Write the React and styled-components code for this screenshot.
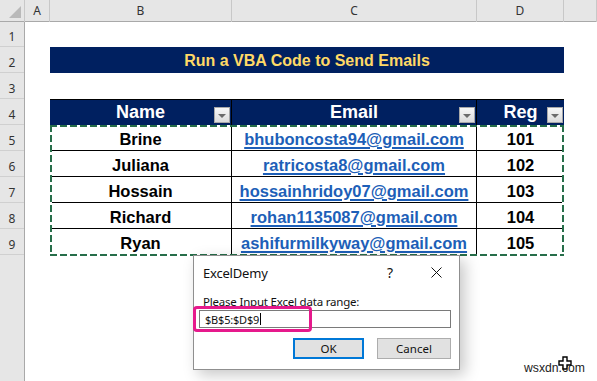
import React from 'react';
import styled, { createGlobalStyle } from 'styled-components';

const GlobalStyle = createGlobalStyle`
  * { box-sizing: border-box; }
  body {
    margin: 0;
    background: #fff;
    overflow: hidden;
    font-family: 'Liberation Sans', Arial, sans-serif;
  }
`;

const Window = styled.div`
  position: relative;
  width: 597px;
  height: 381px;
  overflow: hidden;
  background: #fff;
`;

/* ---------- column headers ---------- */

const ColBar = styled.div`
  display: grid;
  grid-template-columns: 25px 25px 182px 245px 87px 1fr;
  height: 22px;
  background: #e6e6e6;
  border-bottom: 1px solid #a9a9a9;
`;

const Corner = styled.div`
  display: flex;
  align-items: flex-end;
  justify-content: flex-end;
  padding: 0 3px 4px 0;
  border-right: 1px solid #c8c8c8;
`;

const CornerTriangle = styled.span`
  width: 0;
  height: 0;
  border-left: 12px solid transparent;
  border-bottom: 12px solid #b9b9b9;
`;

const ColHead = styled.div`
  font-family: 'Noto Sans', sans-serif;
  font-size: 12px;
  line-height: 22px;
  color: #333;
  text-align: center;
  border-right: 1px solid #c8c8c8;
`;

/* ---------- body ---------- */

const Main = styled.div`
  display: flex;
  height: 359px;
`;

const RowHeads = styled.div`
  display: flex;
  flex-direction: column;
  width: 25px;
  background: #e6e6e6;
  border-right: 1px solid #a9a9a9;
`;

const RowNum = styled.div`
  height: ${(p) => (p.$first ? 25 : 26)}px;
  flex-shrink: 0;
  padding-top: ${(p) => (p.$first ? 5 : 6)}px;
  font-family: 'Noto Sans', sans-serif;
  font-size: 12px;
  line-height: 20px;
  color: #333;
  text-align: center;
  border-bottom: 1px solid #d0d0d0;
`;

const RowFill = styled.div`
  flex: 1;
`;

const Canvas = styled.div`
  display: flex;
  flex-direction: column;
  padding-left: 25px;
`;

const EmptyRow = styled.div`
  height: ${(p) => p.$h || 26}px;
`;

const Title = styled.div`
  width: 514px;
  height: 26px;
  background: #002060;
  color: #ffd966;
  font-weight: bold;
  font-size: 16px;
  line-height: 27px;
  text-align: center;
`;

const Table = styled.div`
  width: 514px;
`;

const TableRow = styled.div`
  display: grid;
  grid-template-columns: 182px 245px 87px;
  height: 26px;
`;

const HeadCell = styled.div`
  position: relative;
  background: #002060;
  color: #fff;
  font-weight: bold;
  font-size: 18px;
  line-height: 25px;
  text-align: center;
  border-right: ${(p) => (p.$last ? 'none' : '1px solid #000')};
  border-top: 1px solid #000;
`;

const FilterBtn = styled.span`
  position: absolute;
  right: 1px;
  bottom: 2px;
  width: 16px;
  height: 16px;
  display: flex;
  align-items: center;
  justify-content: center;
  background: linear-gradient(#f7f7f7, #dcdcdc);
  border: 1px solid #a8a8a8;

  &::after {
    content: '';
    margin-top: 2px;
    border-left: 4px solid transparent;
    border-right: 4px solid transparent;
    border-top: 4px solid #6b6b6b;
  }
`;

const Body = styled.div`
  position: relative;

  &::after {
    content: '';
    position: absolute;
    inset: 0 0 -1px 0;
    pointer-events: none;
    background:
      repeating-linear-gradient(90deg, #276e4a 0 7px, #fff 7px 10px) top / 100% 2px no-repeat,
      repeating-linear-gradient(90deg, #276e4a 0 7px, #fff 7px 10px) bottom / 100% 2px no-repeat,
      repeating-linear-gradient(180deg, #276e4a 0 7px, #fff 7px 10px) left / 2px 100% no-repeat,
      repeating-linear-gradient(180deg, #276e4a 0 7px, #fff 7px 10px) right / 2px 100% no-repeat;
  }
`;

const DataCell = styled.div`
  padding-top: 3px;
  font-weight: bold;
  font-size: 16.5px;
  line-height: 22px;
  color: #000;
  text-align: center;
  white-space: nowrap;
  border-bottom: 1px solid #000;
  border-right: ${(p) => (p.$last ? 'none' : '1px solid #000')};
`;

const Email = styled.span`
  color: #1d5fb8;
  text-decoration: underline;
  text-decoration-thickness: 1.5px;
  text-underline-offset: 2px;
`;

/* ---------- dialog ---------- */

const Dialog = styled.div`
  position: absolute;
  left: 193px;
  top: 255px;
  width: 267px;
  height: 115px;
  background: #fff;
  border: 1px solid #8f8f8f;
  box-shadow: 5px 5px 14px rgba(0, 0, 0, 0.22);
  font-family: 'Noto Sans', sans-serif;
  font-size: 11.5px;
  color: #111;
`;

const TitleBar = styled.div`
  display: flex;
  align-items: center;
  height: 33px;
  padding-left: 9px;
`;

const DialogTitle = styled.span`
  flex: 1;
  font-size: 13px;
  letter-spacing: -0.2px;
`;

const TitleBtn = styled.span`
  width: 46px;
  height: 33px;
  display: flex;
  align-items: center;
  justify-content: center;
  font-size: 14px;
`;

const Prompt = styled.div`
  line-height: 15px;
  margin: 5px 0 0 9px;
  letter-spacing: -0.2px;
`;

const Input = styled.div`
  display: flex;
  align-items: center;
  margin: 1px 0 0 5px;
  width: 252px;
  height: 18px;
  border: 1px solid #7a7a7a;
  padding-left: 5px;
  font-size: 11px;
  letter-spacing: -0.2px;
`;

const Caret = styled.span`
  width: 1px;
  height: 12px;
  margin-left: 1px;
  background: #000;
`;

const Highlight = styled.span`
  position: absolute;
  left: -1px;
  top: 50px;
  width: 119px;
  height: 26px;
  border: 3px solid #e6198c;
  border-radius: 4px;
  pointer-events: none;
`;

const Buttons = styled.div`
  display: flex;
  justify-content: flex-end;
  gap: 13px;
  margin-top: 10px;
  padding-right: 8px;
`;

const Button = styled.div`
  width: ${(p) => p.$w}px;
  height: 21px;
  display: flex;
  align-items: center;
  justify-content: center;
  background: #e1e1e1;
  border: ${(p) => (p.$default ? '2px solid #0078d7' : '1px solid #adadad')};
`;

/* ---------- overlays ---------- */

const Watermark = styled.span`
  position: absolute;
  left: 524px;
  top: 361px;
  font-size: 12.2px;
  color: #222;
`;

const Cursor = styled.svg`
  position: absolute;
  left: 558px;
  top: 356px;
`;

const rows = [
  ['Brine', 'bhuboncosta94@gmail.com', '101'],
  ['Juliana', 'ratricosta8@gmail.com', '102'],
  ['Hossain', 'hossainhridoy07@gmail.com', '103'],
  ['Richard', 'rohan1135087@gmail.com', '104'],
  ['Ryan', 'ashifurmilkyway@gmail.com', '105'],
];

export default function App() {
  return (
    <Window>
      <GlobalStyle />
      <ColBar>
        <Corner>
          <CornerTriangle />
        </Corner>
        <ColHead>A</ColHead>
        <ColHead>B</ColHead>
        <ColHead>C</ColHead>
        <ColHead>D</ColHead>
        <ColHead />
      </ColBar>

      <Main>
        <RowHeads>
          {[1, 2, 3, 4, 5, 6, 7, 8, 9].map((n) => (
            <RowNum key={n} $first={n === 1}>
              {n}
            </RowNum>
          ))}
          <RowFill />
        </RowHeads>

        <Canvas>
          <EmptyRow $h={25} />
          <Title>Run a VBA Code to Send Emails</Title>
          <EmptyRow />
          <Table>
            <TableRow>
              <HeadCell>
                Name
                <FilterBtn />
              </HeadCell>
              <HeadCell>
                Email
                <FilterBtn />
              </HeadCell>
              <HeadCell $last>
                Reg
                <FilterBtn />
              </HeadCell>
            </TableRow>
            <Body>
              {rows.map(([name, email, reg]) => (
                <TableRow key={reg}>
                  <DataCell>{name}</DataCell>
                  <DataCell>
                    <Email>{email}</Email>
                  </DataCell>
                  <DataCell $last>{reg}</DataCell>
                </TableRow>
              ))}
            </Body>
          </Table>
        </Canvas>
      </Main>

      <Dialog>
        <TitleBar>
          <DialogTitle>ExcelDemy</DialogTitle>
          <TitleBtn>?</TitleBtn>
          <TitleBtn>
            <svg width="11" height="11" viewBox="0 0 11 11">
              <path d="M0.5 0.5 L10.5 10.5 M10.5 0.5 L0.5 10.5" stroke="#111" strokeWidth="1" />
            </svg>
          </TitleBtn>
        </TitleBar>
        <Prompt>Please Input Excel data range:</Prompt>
        <Input>
          $B$5:$D$9
          <Caret />
        </Input>
        <Buttons>
          <Button $w={71} $default>OK</Button>
          <Button $w={74}>Cancel</Button>
        </Buttons>
        <Highlight />
      </Dialog>

      <Watermark>wsxdn.com</Watermark>
      <Cursor width="14" height="14" viewBox="0 0 14 14">
        <path d="M5 1 H9 V5 H13 V9 H9 V13 H5 V9 H1 V5 H5 Z" fill="#fff" stroke="#000" strokeWidth="1.4" />
      </Cursor>
    </Window>
  );
}
